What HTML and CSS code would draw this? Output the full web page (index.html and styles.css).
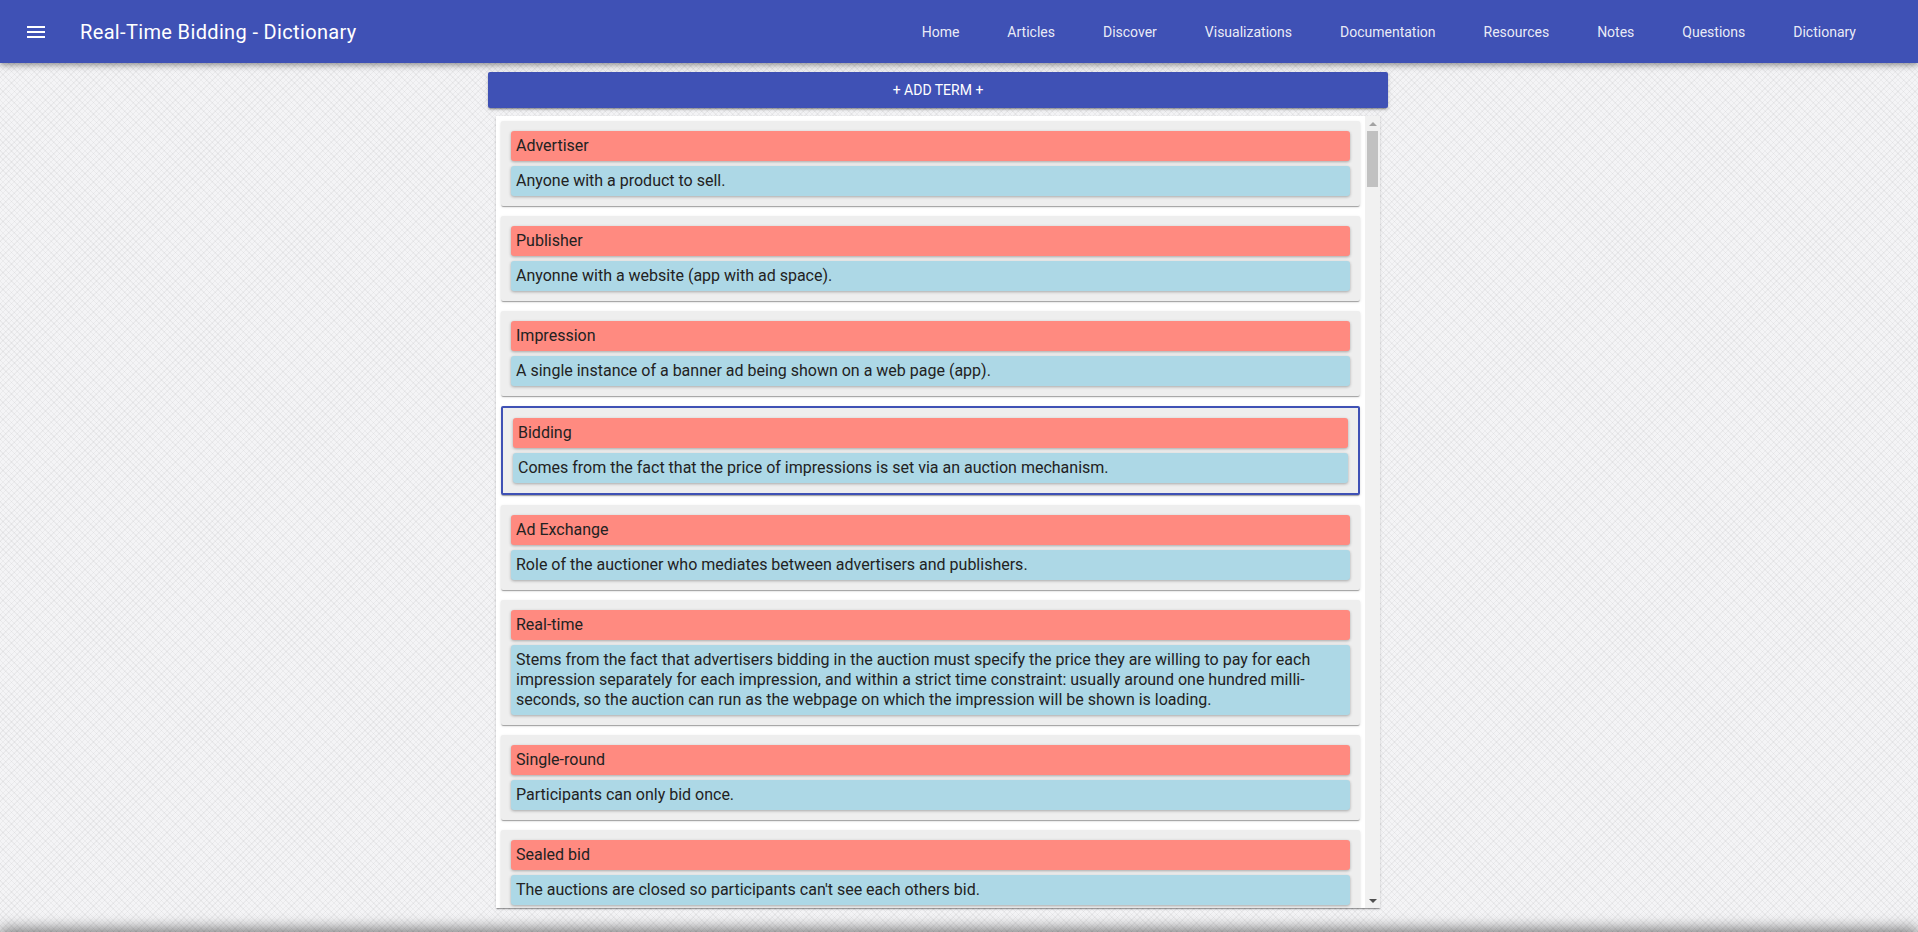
FILE: index.html
```html
<!DOCTYPE html>
<html lang="en">
<head>
<meta charset="utf-8">
<title>Real-Time Bidding - Dictionary</title>
<link rel="stylesheet" href="styles.css">
</head>
<body>
<header class="toolbar">
  <button class="menu-btn" aria-label="Menu">
    <svg viewBox="0 0 24 24" width="24" height="24"><path fill="#fff" d="M3 18h18v-2H3v2zm0-5h18v-2H3v2zm0-7v2h18V6H3z"/></svg>
  </button>
  <span class="title">Real-Time Bidding - Dictionary</span>
  <nav class="nav">
    <a href="#">Home</a>
    <a href="#">Articles</a>
    <a href="#">Discover</a>
    <a href="#">Visualizations</a>
    <a href="#">Documentation</a>
    <a href="#">Resources</a>
    <a href="#">Notes</a>
    <a href="#">Questions</a>
    <a href="#">Dictionary</a>
  </nav>
</header>
<main class="main">
  <div class="column">
    <button class="add-btn">+ Add Term +</button>
    <div class="term-list">
      <div class="term-scroll">
        <div class="term"><div class="term-name">Advertiser</div><div class="term-def">Anyone with a product to sell.</div></div>
        <div class="term"><div class="term-name">Publisher</div><div class="term-def">Anyonne with a website (app with ad space).</div></div>
        <div class="term"><div class="term-name">Impression</div><div class="term-def">A single instance of a banner ad being shown on a web page (app).</div></div>
        <div class="term selected"><div class="term-name">Bidding</div><div class="term-def">Comes from the fact that the price of impressions is set via an auction mechanism.</div></div>
        <div class="term"><div class="term-name">Ad Exchange</div><div class="term-def">Role of the auctioner who mediates between advertisers and publishers.</div></div>
        <div class="term"><div class="term-name">Real-time</div><div class="term-def">Stems from the fact that advertisers bidding in the auction must specify the price they are willing to pay for each impression separately for each impression, and within a strict time constraint: usually around one hundred milli-seconds, so the auction can run as the webpage on which the impression will be shown is loading.</div></div>
        <div class="term"><div class="term-name">Single-round</div><div class="term-def">Participants can only bid once.</div></div>
        <div class="term"><div class="term-name">Sealed bid</div><div class="term-def">The auctions are closed so participants can't see each others bid.</div></div>
      </div>
      <div class="scrollbar" aria-hidden="true">
        <div class="sb-btn"><span class="arrow-up"></span></div>
        <div class="sb-track"><div class="sb-thumb"></div></div>
        <div class="sb-btn"><span class="arrow-down"></span></div>
      </div>
    </div>
  </div>
</main>
<div class="bottom-shade"></div>
</body>
</html>
```

FILE: styles.css
```css
* { box-sizing: border-box; }

html, body {
  margin: 0;
  height: 100%;
}

body {
  font-family: Roboto, "Noto Sans", "Liberation Sans", sans-serif;
  background-color: #f4f4f6;
  background-image:
    repeating-linear-gradient(45deg, rgba(0, 0, 0, 0.04) 0 1px, transparent 1px 4px),
    repeating-linear-gradient(-45deg, rgba(0, 0, 0, 0.04) 0 1px, transparent 1px 4px);
  overflow: hidden;
}

.toolbar {
  position: relative;
  z-index: 2;
  height: 63px;
  display: flex;
  align-items: center;
  padding: 0 38px 0 24px;
  background: #3f51b5;
  color: #fff;
  box-shadow: 0 2px 4px -1px rgba(0, 0, 0, 0.2), 0 4px 5px 0 rgba(0, 0, 0, 0.14), 0 1px 10px 0 rgba(0, 0, 0, 0.12);
}

.menu-btn {
  width: 24px;
  height: 24px;
  padding: 0;
  border: 0;
  background: transparent;
  display: flex;
}

.title {
  margin-left: 32px;
  font-size: 20px;
  font-weight: 400;
  letter-spacing: 0.35px;
}

.nav {
  margin-left: auto;
  display: flex;
}

.nav a {
  padding: 0 24px;
  font-size: 14px;
  line-height: 36px;
  color: rgba(255, 255, 255, 0.9);
  text-decoration: none;
}

.main {
  display: flex;
  justify-content: center;
  padding: 9px 42px 0 0;
}

.column {
  width: 900px;
  display: flex;
  flex-direction: column;
  gap: 8px;
}

.add-btn {
  height: 36px;
  border: 0;
  border-radius: 2px;
  background: #3f51b5;
  color: #fff;
  font-family: Roboto, "Noto Sans", sans-serif;
  font-size: 14px;
  font-weight: 400;
  text-transform: uppercase;
  box-shadow: 0 3px 1px -2px rgba(0, 0, 0, 0.2), 0 2px 2px 0 rgba(0, 0, 0, 0.14), 0 1px 5px 0 rgba(0, 0, 0, 0.12);
}

.term-list {
  margin: 0 8px;
  height: 792px;
  display: flex;
  background: #fff;
  box-shadow: 0 2px 1px -1px rgba(0, 0, 0, 0.2), 0 1px 1px 0 rgba(0, 0, 0, 0.14), 0 1px 3px 0 rgba(0, 0, 0, 0.12);
}

.term-scroll {
  flex: 1;
  min-width: 0;
  overflow: hidden;
  padding: 5px;
  display: flex;
  flex-direction: column;
  gap: 10px;
}

.term {
  flex-shrink: 0;
  display: flex;
  flex-direction: column;
  gap: 5px;
  padding: 10px;
  background: #eeeeee;
  border-radius: 2px;
  box-shadow: 0 2px 1px -1px rgba(0, 0, 0, 0.2), 0 1px 1px 0 rgba(0, 0, 0, 0.14), 0 1px 3px 0 rgba(0, 0, 0, 0.12);
}

.term.selected {
  border: 2px solid #3f51b5;
}

.term-name,
.term-def {
  padding: 5px;
  font-size: 16px;
  line-height: 20px;
  color: #222;
  border-radius: 3px;
  box-shadow: 0 1px 3px rgba(0, 0, 0, 0.3);
}

.term-name { background: #ff8a80; }
.term-def { background: #add8e6; }

.scrollbar {
  width: 15px;
  flex-shrink: 0;
  display: flex;
  flex-direction: column;
  background: #f1f1f1;
}

.sb-btn {
  height: 15px;
  display: flex;
  align-items: center;
  justify-content: center;
}

.arrow-up {
  width: 0;
  height: 0;
  border-left: 4px solid transparent;
  border-right: 4px solid transparent;
  border-bottom: 4px solid #a3a3a3;
}

.arrow-down {
  width: 0;
  height: 0;
  border-left: 4px solid transparent;
  border-right: 4px solid transparent;
  border-top: 4px solid #505050;
}

.sb-track {
  flex: 1;
  padding: 0 2px;
}

.sb-thumb {
  height: 56px;
  background: #c1c1c1;
}

.bottom-shade {
  position: fixed;
  left: 0;
  right: 0;
  bottom: -20px;
  height: 20px;
  box-shadow: 0 -4px 14px rgba(0, 0, 0, 0.45);
}
```
